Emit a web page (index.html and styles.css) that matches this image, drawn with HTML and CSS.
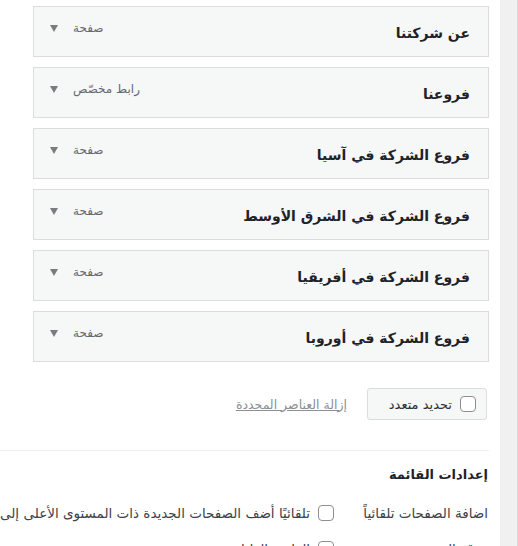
FILE: index.html
```html
<!DOCTYPE html>
<html lang="ar" dir="rtl">
<head>
<meta charset="utf-8">
<link rel="stylesheet" href="styles.css">
</head>
<body>
<div class="layout">
  <aside class="side"></aside>
  <main class="main">
    <ul class="menu">
      <li class="item"><span class="title">عن شركتنا</span><span class="controls"><span class="type">صفحة</span><span class="arrow"></span></span></li>
      <li class="item"><span class="title">فروعنا</span><span class="controls"><span class="type">رابط مخصّص</span><span class="arrow"></span></span></li>
      <li class="item"><span class="title">فروع الشركة في آسيا</span><span class="controls"><span class="type">صفحة</span><span class="arrow"></span></span></li>
      <li class="item"><span class="title">فروع الشركة في الشرق الأوسط</span><span class="controls"><span class="type">صفحة</span><span class="arrow"></span></span></li>
      <li class="item"><span class="title">فروع الشركة في أفريقيا</span><span class="controls"><span class="type">صفحة</span><span class="arrow"></span></span></li>
      <li class="item"><span class="title">فروع الشركة في أوروبا</span><span class="controls"><span class="type">صفحة</span><span class="arrow"></span></span></li>
    </ul>
    <div class="bulk">
      <label class="bulk-btn"><span class="check"></span><span>تحديد متعدد</span></label>
      <a class="remove">إزالة العناصر المحددة</a>
    </div>
    <div class="settings">
      <h3 class="settings-title">إعدادات القائمة</h3>
      <div class="row">
        <div class="label">اضافة الصفحات تلقائياً</div>
        <div class="field"><span class="check"></span><span class="field-text">تلقائيًا أضف الصفحات الجديدة ذات المستوى الأعلى إلى هذه القائمة</span></div>
      </div>
      <div class="row">
        <div class="label">موقع العرض</div>
        <div class="field"><span class="check"></span><span class="field-text">القائمة العليا</span></div>
      </div>
    </div>
  </main>
</div>
</body>
</html>
```

FILE: styles.css
```css
html, body {
  margin: 0;
  padding: 0;
  height: 100%;
  overflow: hidden;
}
body {
  background: #fff;
  font-family: "DejaVu Sans", "Noto Sans", sans-serif;
  color: #1d2327;
}
.layout {
  display: flex;
  height: 100%;
}
.side {
  width: 17px;
  flex: none;
  background: #f0f0f1;
  border-right: 1px solid #dcdcde;
}
.main {
  width: 500px;
  flex: none;
  padding-right: 11px;
  box-sizing: border-box;
  overflow: hidden;
}
.menu {
  list-style: none;
  margin: 6px 0 0;
  padding: 0;
  width: 456px;
}
.item {
  display: flex;
  justify-content: space-between;
  align-items: flex-start;
  height: 49px;
  border: 1px solid #dcdcde;
  background: #f6f7f7;
  margin-bottom: 10px;
  padding: 0 18px 0 16px;
}
.title {
  font-size: 14px;
  font-weight: bold;
  line-height: 20px;
  margin-top: 16px;
  color: #1d2327;
}
.controls {
  display: flex;
  align-items: center;
  gap: 15px;
  margin-top: 13px;
}
.type {
  font-size: 12px;
  line-height: 16px;
  color: #646970;
}
.arrow {
  width: 0;
  height: 0;
  border-left: 4.5px solid transparent;
  border-right: 4.5px solid transparent;
  border-top: 7px solid #787c82;
}
.bulk {
  display: flex;
  align-items: center;
  gap: 20px;
  margin-top: 26px;
  padding-right: 2px;
}
.bulk-btn {
  display: flex;
  align-items: center;
  gap: 8px;
  height: 30px;
  padding: 0 10px;
  width: 98px;
  border: 1px solid #dcdcde;
  border-radius: 3px;
  background: #f6f7f7;
  font-size: 13px;
  color: #2c3338;
}
.check {
  width: 14px;
  height: 14px;
  flex: none;
  border: 1px solid #8c8f94;
  border-radius: 4px;
  background: #fff;
}
.remove {
  font-size: 12.5px;
  color: #8c8f94;
  text-decoration: underline;
}
.settings {
  margin-top: 30px;
  border-top: 1px solid #f0f0f1;
  width: 490px;
  padding-right: 1px;
}
.settings-title {
  margin: 14px 0 0;
  font-size: 13px;
  font-weight: bold;
  line-height: 20px;
  color: #1d2327;
}
.row {
  display: flex;
  align-items: center;
  margin-top: 20px;
  font-size: 13.5px;
  color: #3c434a;
  white-space: nowrap;
}
.label {
  width: 154px;
  flex: none;
}
.field {
  display: flex;
  align-items: center;
  gap: 8px;
}
```
